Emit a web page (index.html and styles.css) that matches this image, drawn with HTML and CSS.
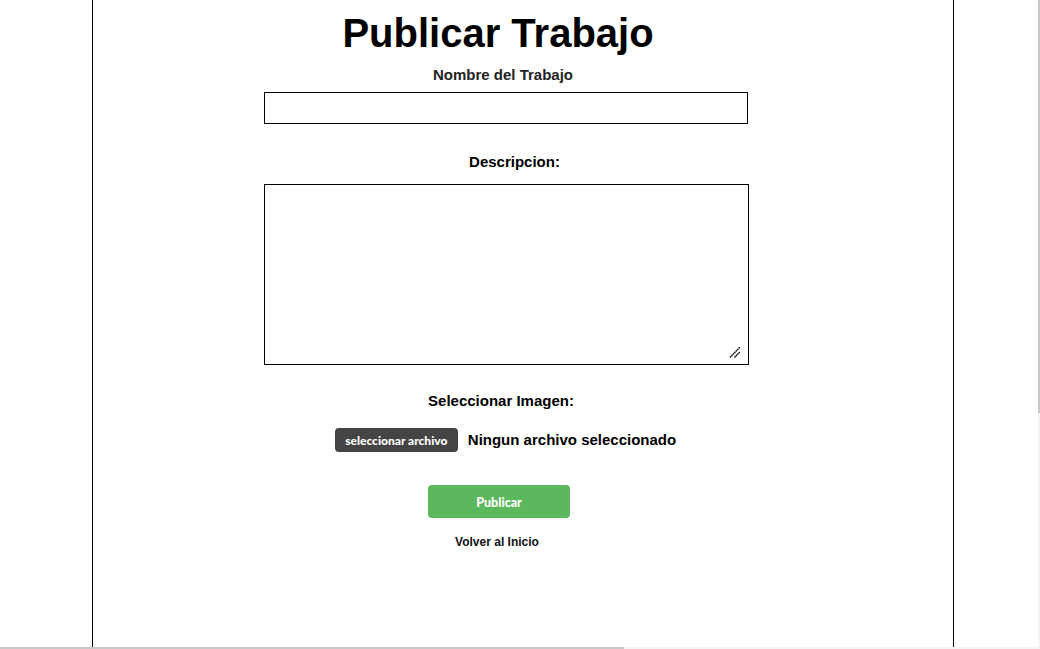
FILE: index.html
```html
<!DOCTYPE html>
<html lang="es">
<head>
<meta charset="utf-8">
<title>Publicar Trabajo</title>
<link rel="stylesheet" href="styles.css">
</head>
<body>
<div class="page">
  <form class="form">
    <h1 class="title">Publicar Trabajo</h1>
    <label class="label label-name" for="nombre">Nombre del Trabajo</label>
    <input class="field" id="nombre" type="text">
    <label class="label label-desc" for="desc">Descripcion:</label>
    <div class="area-wrap">
      <textarea class="area" id="desc"></textarea>
      <svg class="grip" width="12" height="12" viewBox="0 0 12 12" aria-hidden="true">
        <line x1="1" y1="11.5" x2="10.8" y2="1.2" stroke="#111" stroke-width="1.4" stroke-dasharray="1.6 0.5"/>
        <line x1="5.5" y1="11.5" x2="10.8" y2="6" stroke="#111" stroke-width="1.4" stroke-dasharray="1.6 0.5"/>
      </svg>
    </div>
    <label class="label label-img">Seleccionar Imagen:</label>
    <div class="file-row">
      <span class="file-btn">seleccionar archivo</span>
      <span class="file-name">Ningun archivo seleccionado</span>
    </div>
    <button class="submit" type="button">Publicar</button>
    <a class="back" href="#">Volver al Inicio</a>
  </form>
</div>
<div class="sb-v"><div class="sb-v-thumb"></div></div>
<div class="sb-h"><div class="sb-h-thumb"></div></div>
</body>
</html>
```

FILE: styles.css
```css
html, body {
  margin: 0;
  padding: 0;
}

body {
  font-family: "Liberation Sans", Arial, sans-serif;
  background: #fff;
  overflow: hidden;
}

.page {
  margin-left: 92px;
  width: 860px;
  min-height: 100vh;
  border-left: 1px solid #000;
  border-right: 1px solid #000;
}

.form {
  display: flex;
  flex-direction: column;
  align-items: center;
  width: 486px;
  margin-left: 171px;
  padding-top: 10px;
}

.title {
  margin: 0 18px 0 0;
  font-size: 40px;
  line-height: 47px;
  font-weight: bold;
  color: #000;
}

.label {
  display: block;
  font-size: 15px;
  line-height: 18px;
  font-weight: bold;
  color: #000;
}

.label-name {
  margin: 9px 8px 0 0;
  color: #222;
}

.label-desc {
  margin: 29px 0 0 15px;
}

.label-img {
  margin: 27px 12px 0 0;
}

.field {
  align-self: flex-start;
  box-sizing: border-box;
  width: 484px;
  height: 32px;
  margin: 8px 0 0 0;
  padding: 2px 4px;
  border: 1px solid #000;
  border-radius: 0;
  font-family: inherit;
  font-size: 14px;
  background: #fff;
  outline: none;
}

.area-wrap {
  position: relative;
  align-self: flex-start;
  width: 485px;
  height: 181px;
  margin-top: 13px;
}

.area {
  display: block;
  box-sizing: border-box;
  width: 485px;
  height: 181px;
  margin: 0;
  padding: 2px;
  border: 1px solid #000;
  border-radius: 0;
  font-family: inherit;
  font-size: 14px;
  background: #fff;
  outline: none;
  resize: none;
}

.grip {
  position: absolute;
  right: 8px;
  bottom: 7px;
}

.file-row {
  display: flex;
  align-items: center;
  gap: 10px;
  margin: 18px 3px 0 0;
}

.file-btn {
  display: flex;
  align-items: center;
  justify-content: center;
  box-sizing: border-box;
  width: 123px;
  height: 24px;
  padding-top: 1px;
  background: #444;
  color: #fff;
  border-radius: 4px;
  font-family: Lato, "Liberation Sans", sans-serif;
  font-weight: 900;
  font-size: 12px;
}

.file-name {
  font-size: 15px;
  line-height: 18px;
  font-weight: bold;
  color: #000;
}

.submit {
  box-sizing: border-box;
  width: 142px;
  height: 33px;
  margin: 33px 16px 0 0;
  padding: 1px 0 0 0;
  border: none;
  border-radius: 4px;
  background: #5cb85c;
  color: #fff;
  font-family: Lato, "Liberation Sans", sans-serif;
  font-weight: 900;
  font-size: 12.5px;
}

.back {
  margin: 17px 20px 0 0;
  font-size: 12px;
  line-height: 14px;
  font-weight: bold;
  color: #111;
  text-decoration: none;
}

.sb-v {
  position: fixed;
  top: 0;
  right: 0;
  width: 2px;
  height: 100vh;
  background: #f4f4f4;
}

.sb-v-thumb {
  width: 2px;
  height: 413px;
  background: #c8c8c8;
}

.sb-h {
  position: fixed;
  left: 0;
  bottom: 0;
  width: 100vw;
  height: 2px;
  background: #f4f4f4;
}

.sb-h-thumb {
  width: 624px;
  height: 2px;
  background: #c8c8c8;
}
```
